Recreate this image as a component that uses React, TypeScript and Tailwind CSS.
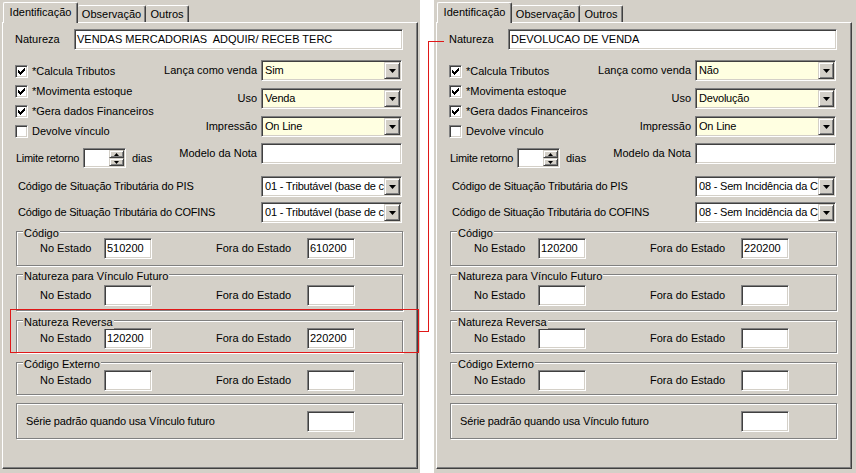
import React from 'react';

// classic win2k bevels
const sunken =
  'border border-t-[#808080] border-l-[#808080] border-r-white border-b-white shadow-[inset_1px_1px_0_#404040,inset_-1px_-1px_0_#d4d0c8]';
const raised =
  'border border-t-[#d4d0c8] border-l-[#d4d0c8] border-r-[#404040] border-b-[#404040] shadow-[inset_1px_1px_0_#fff,inset_-1px_-1px_0_#808080]';

type Pair = [string, string];

type PanelData = {
  natureza: string;
  lanca: string;
  uso: string;
  impressao: string;
  pis: string;
  cofins: string;
  codigo: Pair;
  vinculo: Pair;
  reversa: Pair;
  externo: Pair;
};

const left: PanelData = {
  natureza: 'VENDAS MERCADORIAS  ADQUIR/ RECEB TERC',
  lanca: 'Sim',
  uso: 'Venda',
  impressao: 'On Line',
  pis: '01 - Tributável (base de c',
  cofins: '01 - Tributável (base de c',
  codigo: ['510200', '610200'],
  vinculo: ['', ''],
  reversa: ['120200', '220200'],
  externo: ['', ''],
};

const right: PanelData = {
  natureza: 'DEVOLUCAO DE VENDA',
  lanca: 'Não',
  uso: 'Devolução',
  impressao: 'On Line',
  pis: '08 - Sem Incidência da Co',
  cofins: '08 - Sem Incidência da Co',
  codigo: ['120200', '220200'],
  vinculo: ['', ''],
  reversa: ['', ''],
  externo: ['', ''],
};

function Edit({ value = '', className = '' }: { value?: string; className?: string }) {
  return (
    <div className={`${sunken} bg-white h-[21px] p-px flex items-center overflow-hidden whitespace-pre shrink-0 ${className}`}>
      <span className="pl-px">{value}</span>
    </div>
  );
}

function DownArrow() {
  return (
    <svg width="7" height="4" viewBox="0 0 7 4">
      <path d="M0 0H7L3.5 4Z" fill="#000" />
    </svg>
  );
}

function Combo({ value, yellow = false }: { value: string; yellow?: boolean }) {
  return (
    <div className={`${sunken} ${yellow ? 'bg-[#ffffe1]' : 'bg-white'} w-[141px] h-[21px] p-px flex shrink-0`}>
      <div className="flex-1 min-w-0 overflow-hidden whitespace-nowrap pl-[2px] leading-[17px] tracking-[-0.2px]">{value}</div>
      <div className={`${raised} w-[16px] shrink-0 bg-[#d4d0c8] flex items-center justify-center`}>
        <DownArrow />
      </div>
    </div>
  );
}

function Spin() {
  return (
    <div className={`${sunken} bg-white w-[43px] h-[20px] p-px flex justify-end shrink-0`}>
      <div className="w-[15px] flex flex-col">
        <div className={`${raised} bg-[#d4d0c8] h-[8px] flex items-center justify-center`}>
          <svg width="5" height="3" viewBox="0 0 5 3">
            <path d="M2.5 0L5 3H0Z" fill="#000" />
          </svg>
        </div>
        <div className={`${raised} bg-[#d4d0c8] h-[8px] flex items-center justify-center`}>
          <svg width="5" height="3" viewBox="0 0 5 3">
            <path d="M0 0H5L2.5 3Z" fill="#000" />
          </svg>
        </div>
      </div>
    </div>
  );
}

function Check({ checked, label }: { checked: boolean; label: string }) {
  return (
    <div className="h-[20px] flex items-center gap-[4px]">
      <div className={`${sunken} bg-white w-[13px] h-[13px] flex items-center justify-center shrink-0`}>
        {checked && (
          <svg width="7" height="7" viewBox="0 0 7 7" shapeRendering="crispEdges">
            <rect x="0" y="2" width="1" height="3" />
            <rect x="1" y="3" width="1" height="3" />
            <rect x="2" y="4" width="1" height="3" />
            <rect x="3" y="3" width="1" height="3" />
            <rect x="4" y="2" width="1" height="3" />
            <rect x="5" y="1" width="1" height="3" />
            <rect x="6" y="0" width="1" height="3" />
          </svg>
        )}
      </div>
      <span>{label}</span>
    </div>
  );
}

function Group({
  title,
  className,
  children,
}: {
  title?: string;
  className: string;
  children: React.ReactNode;
}) {
  return (
    <div className={`relative ml-[13px] w-[387px] border border-[#808080] shadow-[inset_1px_1px_0_#fff,1px_1px_0_#fff] ${className}`}>
      {title && (
        <span className="absolute left-[6px] top-[-5px] bg-[#d4d0c8] px-px leading-[13px]">{title}</span>
      )}
      {children}
    </div>
  );
}

function EstadoRow({ values }: { values: Pair }) {
  return (
    <div className="flex items-center h-[21px] pl-[23px]">
      <span className="w-[64px]">No Estado</span>
      <Edit value={values[0]} className="w-[48px]" />
      <span className="ml-[64px] w-[91px]">Fora do Estado</span>
      <Edit value={values[1]} className="w-[48px]" />
    </div>
  );
}

function Tabs() {
  return (
    <div className="flex items-end h-[20px] ml-[3px] relative z-10">
      <div className="h-[21px] -mb-px w-[75px] bg-[#d4d0c8] border-t border-l border-r border-t-white border-l-white border-r-[#404040] shadow-[inset_-1px_0_0_#808080] rounded-t-[2px] flex justify-center pt-[3px] leading-[13px]">
        Identificação
      </div>
      <div className="h-[17px] w-[68px] border-t border-r border-t-white border-r-[#404040] shadow-[inset_-1px_0_0_#808080] rounded-t-[2px] flex justify-center pt-[2px] leading-[13px]">
        Observação
      </div>
      <div className="h-[17px] w-[43px] border-t border-r border-t-white border-r-[#404040] shadow-[inset_-1px_0_0_#808080] rounded-t-[2px] flex justify-center pt-[2px] leading-[13px]">
        Outros
      </div>
    </div>
  );
}

function Panel({ d }: { d: PanelData }) {
  return (
    <div className="w-[420px] h-[473px] bg-[#d4d0c8] pt-[2px] shrink-0">
      <Tabs />
      <div className="ml-[2px] w-[416px] h-[447px] border-t border-l border-r border-b border-t-white border-l-white border-r-[#404040] border-b-[#404040] shadow-[inset_-1px_-1px_0_#808080]">
        {/* Natureza */}
        <div className="mt-[6px] flex items-center h-[21px] pl-[12px]">
          <span className="w-[59px]">Natureza</span>
          <Edit value={d.natureza} className="w-[329px]" />
        </div>

        {/* checks + combos */}
        <div className="mt-[10px] flex pl-[12px]">
          <div className="w-[146px] pt-px flex flex-col">
            <Check checked label="*Calcula Tributos" />
            <Check checked label="*Movimenta estoque" />
            <Check checked label="*Gera dados Financeiros" />
            <Check checked={false} label="Devolve vínculo" />
          </div>
          <div className="w-[241px] flex flex-col gap-[7px]">
            <div className="flex items-center justify-end h-[21px] gap-[4px]">
              <span>Lança como venda</span>
              <Combo value={d.lanca} yellow />
            </div>
            <div className="flex items-center justify-end h-[21px] gap-[4px]">
              <span>Uso</span>
              <Combo value={d.uso} yellow />
            </div>
            <div className="flex items-center justify-end h-[21px] gap-[4px]">
              <span>Impressão</span>
              <Combo value={d.impressao} yellow />
            </div>
          </div>
        </div>

        {/* Limite retorno / Modelo */}
        <div className="mt-[2px] flex items-start pl-[13px]">
          <div className="w-[145px] mt-[5px] h-[20px] flex items-center">
            <span className="w-[67px] tracking-[-0.3px]">Limite retorno</span>
            <Spin />
            <span className="ml-[6px]">dias</span>
          </div>
          <div className="w-[241px] flex items-center justify-end gap-[4px]">
            <span>Modelo da Nota</span>
            <Edit className="w-[141px]" />
          </div>
        </div>

        <div className="mt-[8px] flex items-center h-[21px]">
          <span className="w-[258px] pl-[15px] tracking-[-0.15px]">Código de Situação Tributária do PIS</span>
          <Combo value={d.pis} />
        </div>
        <div className="mt-[5px] flex items-center h-[21px]">
          <span className="w-[258px] pl-[15px] tracking-[-0.2px]">Código de Situação Tributária do COFINS</span>
          <Combo value={d.cofins} />
        </div>

        <Group title="Código" className="mt-[8px] h-[35px] pt-[6px]">
          <EstadoRow values={d.codigo} />
        </Group>
        <Group title="Natureza para Vínculo Futuro" className="mt-[8px] h-[37px] pt-[10px]">
          <EstadoRow values={d.vinculo} />
        </Group>
        <Group title="Natureza Reversa" className="mt-[9px] h-[33px] pt-[7px]">
          <EstadoRow values={d.reversa} />
        </Group>
        <Group title="Código Externo" className="mt-[9px] h-[33px] pt-[7px]">
          <EstadoRow values={d.externo} />
        </Group>
        <Group className="mt-[8px] h-[36px] pt-[7px]">
          <div className="flex items-center h-[21px]">
            <span className="w-[290px] pl-[9px] tracking-[-0.15px]">Série padrão quando usa Vínculo futuro</span>
            <Edit className="w-[48px]" />
          </div>
        </Group>
      </div>
    </div>
  );
}

export default function App() {
  return (
    <div className="relative w-[856px] h-[473px] flex bg-[#d4d0c8] overflow-hidden whitespace-nowrap font-['Liberation_Sans',Arial,sans-serif] text-[11px] leading-[13px] text-black">
      <Panel d={left} />
      <div className="w-[14px] h-full bg-white shrink-0" />
      <Panel d={right} />

      {/* red annotation: Natureza Reversa -> Natureza */}
      <div className="absolute left-[10px] top-[309px] w-[409px] h-[44px] border border-[#e01818]" />
      <div className="absolute left-[418px] top-[331px] w-[11px] h-px bg-[#e01818]" />
      <div className="absolute left-[428px] top-[41px] w-px h-[291px] bg-[#e01818]" />
      <div className="absolute left-[428px] top-[41px] w-[16px] h-px bg-[#e01818]" />
    </div>
  );
}
